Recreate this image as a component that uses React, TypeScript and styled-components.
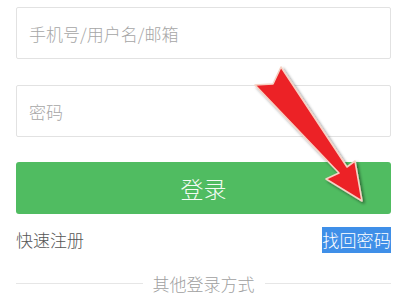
import styled, { createGlobalStyle } from "styled-components";

const GlobalStyle = createGlobalStyle`
  html, body {
    margin: 0;
    padding: 0;
    background: #ffffff;
    font-family: "Noto Sans CJK SC", "Noto Sans", sans-serif;
  }
`;

const App = () => {
  return (
    <Page>
      <GlobalStyle />
      <Form>
        <Field placeholder="手机号/用户名/邮箱" />
        <Field placeholder="密码" type="password" />
        <LoginButton type="button">登录</LoginButton>
        <LinkRow>
          <PlainLink>快速注册</PlainLink>
          <SelectedLink>找回密码</SelectedLink>
        </LinkRow>
        <Divider>
          <DividerLine />
          <DividerText>其他登录方式</DividerText>
          <DividerLine />
        </Divider>
      </Form>
      <ArrowOverlay width="400" height="300" viewBox="0 0 400 300">
        <defs>
          <filter id="arrowShadow" x="-20%" y="-20%" width="140%" height="140%">
            <feDropShadow dx="2" dy="2" stdDeviation="1.6" floodColor="#000" floodOpacity="0.45" />
          </filter>
        </defs>
        <polygon
          points="281,67 347,167 355,161 362,201 326,179 339,173 255,85 273,84"
          fill="#ec2027"
          stroke="#f6d2c4"
          strokeWidth="1.6"
          strokeLinejoin="round"
          filter="url(#arrowShadow)"
        />
      </ArrowOverlay>
    </Page>
  );
};

export default App;

const Page = styled.div`
  position: relative;
  width: 400px;
  height: 300px;
  overflow: hidden;
`;

const Form = styled.div`
  display: flex;
  flex-direction: column;
  padding: 7px 9px 0 16px;
`;

const Field = styled.input`
  box-sizing: border-box;
  height: 52px;
  margin-bottom: 26px;
  padding: 0 12px;
  border: 1px solid #e2e2e2;
  border-radius: 2px;
  font-family: inherit;
  font-size: 17px;
  font-weight: 300;
  color: #333;
  outline: none;

  &:nth-of-type(2) {
    margin-bottom: 25px;
  }

  &::placeholder {
    color: #a6a6a6;
  }
`;

const LoginButton = styled.button`
  height: 52px;
  border: none;
  border-radius: 3px;
  background: #50bc61;
  color: #f4fbf4;
  font-family: inherit;
  font-size: 23px;
  font-weight: 300;
  cursor: pointer;
`;

const LinkRow = styled.div`
  display: flex;
  justify-content: space-between;
  align-items: center;
  margin-top: 13px;
  height: 26px;
`;

const PlainLink = styled.span`
  font-size: 17px;
  font-weight: 300;
  color: #555;
  line-height: 26px;
`;

const SelectedLink = styled.span`
  font-size: 17px;
  font-weight: 300;
  line-height: 26px;
  color: #ffffff;
  background: #3f8fe8;
  letter-spacing: 0.2px;
`;

const Divider = styled.div`
  display: flex;
  align-items: center;
  gap: 10px;
  margin-top: 20px;
  height: 20px;
`;

const DividerLine = styled.div`
  flex: 1;
  height: 1px;
  background: #e6e6e6;
`;

const DividerText = styled.span`
  font-size: 17px;
  font-weight: 300;
  color: #a0a0a0;
`;

const ArrowOverlay = styled.svg`
  position: absolute;
  left: 0;
  top: 0;
  pointer-events: none;
`;
